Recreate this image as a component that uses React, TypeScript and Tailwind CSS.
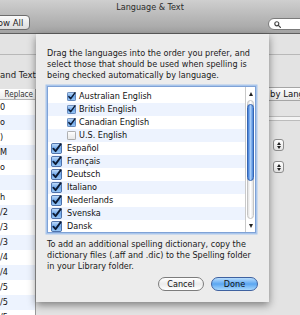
import React from "react";

const FONT = { fontFamily: '"DejaVu Sans Condensed", "DejaVu Sans", sans-serif' };

function Check({ checked, small }: { checked: boolean; small?: boolean }) {
  const s = small ? 9 : 11;
  return (
    <svg width={s} height={s} viewBox="0 0 12 12" className="shrink-0">
      <defs>
        <linearGradient id="cbBlue" x1="0" y1="0" x2="0" y2="1">
          <stop offset="0" stopColor="#c7e0fb" />
          <stop offset="0.5" stopColor="#6fa8ea" />
          <stop offset="1" stopColor="#9cc9f6" />
        </linearGradient>
        <linearGradient id="cbWhite" x1="0" y1="0" x2="0" y2="1">
          <stop offset="0" stopColor="#ffffff" />
          <stop offset="1" stopColor="#e6e6e6" />
        </linearGradient>
      </defs>
      <rect
        x="0.5"
        y="0.5"
        width="11"
        height="11"
        rx="1.5"
        fill={checked ? "url(#cbBlue)" : "url(#cbWhite)"}
        stroke={checked ? "#3f64a0" : "#8a8a8a"}
      />
      {checked && (
        <path
          d="M2.6 6.2 L5 8.9 L10.6 1.2"
          fill="none"
          stroke="#0d1b33"
          strokeWidth="2"
          strokeLinecap="round"
          strokeLinejoin="round"
        />
      )}
    </svg>
  );
}

const langs: { name: string; checked: boolean; sub?: boolean }[] = [
  { name: "Australian English", checked: true, sub: true },
  { name: "British English", checked: true, sub: true },
  { name: "Canadian English", checked: true, sub: true },
  { name: "U.S. English", checked: false, sub: true },
  { name: "Español", checked: true },
  { name: "Français", checked: true },
  { name: "Deutsch", checked: true },
  { name: "Italiano", checked: true },
  { name: "Nederlands", checked: true },
  { name: "Svenska", checked: true },
  { name: "Dansk", checked: true },
];

const bgRows = ["0", "o", ")", "M", "o", "", "h", "/2", "/3", "/3", "/4", "/4", "/5", "/5", "/5"];

function Stepper() {
  return (
    <div className="w-[11px] h-[12px] rounded-[3px] border border-[#8d8d8d] bg-gradient-to-b from-white to-[#e4e4e4] flex flex-col items-center justify-center gap-[1px]">
      <div className="w-0 h-0 border-l-[2px] border-r-[2px] border-b-[3px] border-l-transparent border-r-transparent border-b-[#222]" />
      <div className="w-0 h-0 border-l-[2px] border-r-[2px] border-t-[3px] border-l-transparent border-r-transparent border-t-[#222]" />
    </div>
  );
}

export default function App() {
  return (
    <div className="w-[300px] h-[315px] relative overflow-hidden bg-[#e3e3e3] text-[#111]" style={FONT}>
      {/* Unified title bar / toolbar */}
      <div className="h-[34px] relative bg-gradient-to-b from-[#cfcfcf] to-[#a3a3a3] border-b border-[#5f5f5f]">
        <div className="flex justify-center pt-[1px] text-[9px] leading-[13px] text-[#2b2b2b] whitespace-nowrap">Language &amp; Text</div>
        <div className="flex items-center justify-between mt-[1px]">
          <div className="ml-[-20px] h-[15px] px-[6px] rounded-[4px] border border-[#6d6d6d] bg-gradient-to-b from-[#fbfbfb] to-[#dcdcdc] text-[9.5px] leading-[13px] text-[#222] flex items-center whitespace-nowrap">
            Show All
          </div>
          <div className="mr-[-20px] mt-[3px] w-[52px] h-[12px] rounded-full bg-white border border-[#7b7b7b] flex items-center pl-[5px]">
            <svg width="7" height="7" viewBox="0 0 8 8">
              <circle cx="3.2" cy="3.2" r="2.3" fill="none" stroke="#444" strokeWidth="1.3" />
              <path d="M5 5 L7.3 7.3" stroke="#444" strokeWidth="1.5" strokeLinecap="round" />
            </svg>
          </div>
        </div>
      </div>

      {/* Background content */}
      <div className="h-[21px] border-b border-[#b8b8b8]" />
      <div className="flex">
        {/* left table */}
        <div className="w-[36px] shrink-0">
          <div className="h-[12px] mt-[14px] text-[9.5px] leading-[12px] text-right whitespace-nowrap text-[#222] pr-[1px]">and Text</div>
          <div className="mt-[8px] border-r border-[#9a9a9a] bg-white">
            <div className="h-[11px] border-b border-[#b5b5b5] bg-gradient-to-b from-white to-[#ececec] text-[8px] leading-[11px] text-right pr-[2px] text-[#333]">Replace</div>
            {bgRows.map((r, i) => (
              <div
                key={i}
                className={`h-[15px] text-[9px] leading-[15px] pl-[0px] ${i % 2 === 1 ? "bg-[#edf3fe]" : "bg-white"}`}
              >
                {r}
              </div>
            ))}
          </div>
        </div>
        <div className="flex-1" />
        {/* right controls */}
        <div className="w-[31px] shrink-0 pt-[32px]">
          <div className="h-[14px] bg-gradient-to-b from-[#fdfdfd] to-[#e6e6e6] border-y border-[#a5a5a5] text-[9.5px] leading-[12px] pl-[1px] whitespace-nowrap overflow-hidden">by Lang</div>
          <div className="mt-[15px] h-[5px] border-y border-[#bcbcbc] bg-[#f4f4f4]" />
          <div className="mt-[18px] pl-[4px] flex flex-col gap-[10px]">
            <Stepper />
            <Stepper />
          </div>
        </div>
      </div>

      {/* Sheet */}
      <div className="absolute left-[36px] top-[34px] w-[233px] h-[268px] bg-[#ececec] shadow-[0_3px_8px_rgba(0,0,0,0.45)] pt-[14px] px-[11px]">
        <p className="text-[9px] leading-[11px] text-[#1a1a1a] whitespace-nowrap">
          Drag the languages into the order you prefer, and
          <br />
          select those that should be used when spelling is
          <br />
          being checked automatically by language.
        </p>
        <div className="mt-[5px] w-[209px] h-[147px] border border-[#7fa2d6] shadow-[0_0_0_1.5px_#a9c6ec] bg-white flex">
          <div className="flex-1 pt-[3px] overflow-hidden">
            {langs.map((l, i) => (
              <div
                key={l.name}
                className={`h-[13px] flex items-center ${i % 2 === 0 ? "bg-white" : "bg-[#edf3fe]"} ${l.sub ? "pl-[19px] gap-[3px]" : "pl-[3px] gap-[5px]"}`}
              >
                <Check checked={l.checked} small={l.sub} />
                <span className="text-[9px] leading-[13px] whitespace-nowrap">{l.name}</span>
              </div>
            ))}
          </div>
          {/* scrollbar */}
          <div className="w-[10px] shrink-0 border-l border-[#c9c9c9] bg-white flex flex-col">
            <div className="h-[13px] flex items-center justify-center">
              <div className="w-0 h-0 border-l-[2.5px] border-r-[2.5px] border-b-[4px] border-l-transparent border-r-transparent border-b-[#222]" />
            </div>
            <div className="flex-1 mx-[1px] rounded-full bg-gradient-to-r from-[#e2e2e2] via-white to-[#e2e2e2] border border-[#c4c4c4] relative">
              <div className="absolute left-[-1px] right-[-1px] top-[3px] h-[77px] rounded-full border border-[#3565b3] bg-gradient-to-r from-[#3a79d6] via-[#a9cdf7] to-[#4a86da]" />
            </div>
            <div className="h-[13px] flex items-center justify-center">
              <div className="w-0 h-0 border-l-[2.5px] border-r-[2.5px] border-t-[4px] border-l-transparent border-r-transparent border-t-[#222]" />
            </div>
          </div>
        </div>
        <p className="mt-[6px] text-[9px] leading-[11px] text-[#1a1a1a] whitespace-nowrap">
          To add an additional spelling dictionary, copy the
          <br />
          dictionary files (.aff and .dic) to the Spelling folder
          <br />
          in your Library folder.
        </p>
        <div className="mt-[5px] flex justify-end gap-[7px]">
          <div className="w-[46px] h-[14px] rounded-full border border-[#7c7c7c] bg-gradient-to-b from-white via-[#ececec] to-white text-[9px] leading-[12px] flex items-center justify-center">
            Cancel
          </div>
          <div className="w-[47px] h-[14px] rounded-full border border-[#3f62a0] bg-gradient-to-b from-[#b7dcfc] via-[#5aa6f1] to-[#a7d7fc] text-[9px] leading-[12px] flex items-center justify-center">
            Done
          </div>
        </div>
      </div>
    </div>
  );
}
